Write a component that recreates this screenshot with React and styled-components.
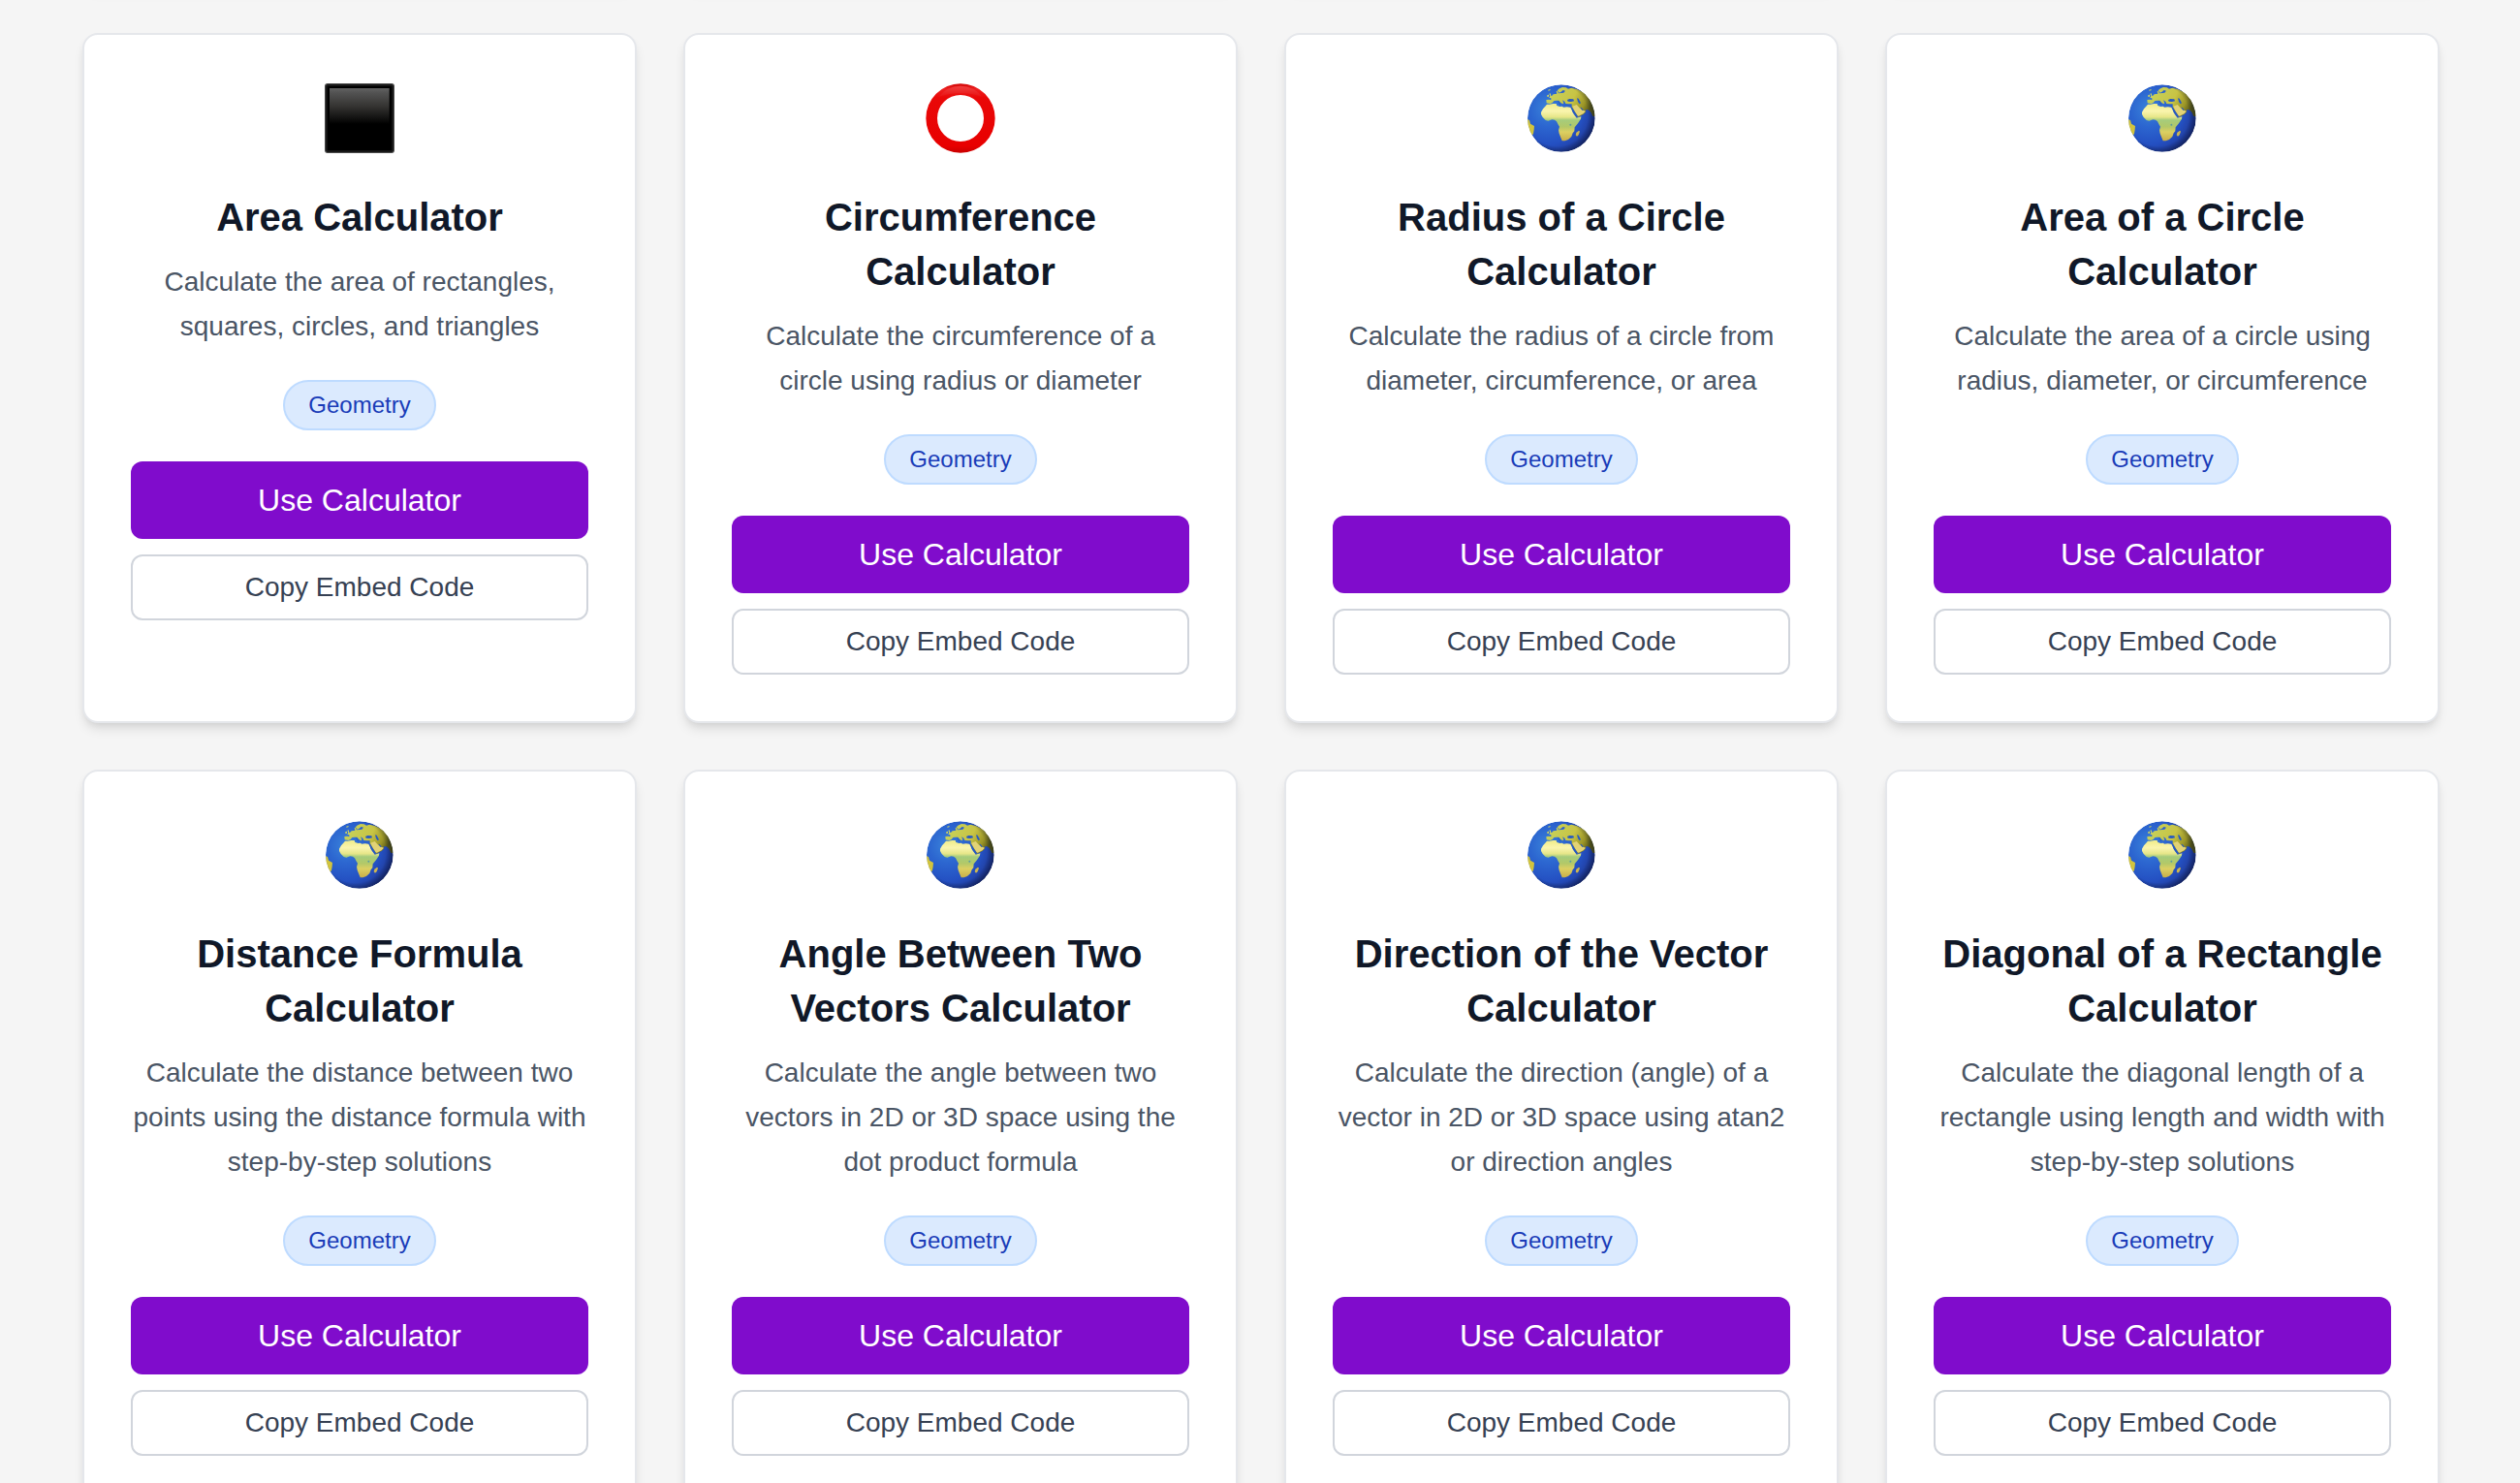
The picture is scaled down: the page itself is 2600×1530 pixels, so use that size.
import React from 'react';
import styled, { createGlobalStyle } from "styled-components";

const GlobalStyle = createGlobalStyle`
    * {
        box-sizing: border-box;
    }

    body {
        margin: 0;
        background-color: #F5F5F5;
        font-family: "Liberation Sans", Arial, sans-serif;
    }
`;

const Page = styled.main`
    padding: 34px 83px 48px 85px;
    overflow: hidden;
`;

const Grid = styled.div`
    display: grid;
    grid-template-columns: repeat(4, minmax(0, 1fr));
    gap: 48px;
`;

const PreviousRow = styled(Grid)`
    height: 100px;
    margin-top: -148px;
    margin-bottom: 48px;
`;

const Card = styled.article`
    background-color: #FFFFFF;
    border: 2px solid #E5E7EB;
    border-radius: 16px;
    padding: 48px;
    text-align: center;
    box-shadow: 0 8px 12px -2px rgba(0, 0, 0, 0.1), 0 4px 8px -4px rgba(0, 0, 0, 0.1);
`;

const IconBox = styled.div`
    height: 80px;
    padding-top: 2px;
    margin-bottom: 32px;
`;

const Icon = styled.svg`
    display: block;
    width: 72px;
    height: 72px;
    margin: 0 auto;
`;

const Title = styled.h3`
    margin: 0 0 16px;
    color: #101828;
    font-size: 40px;
    font-weight: 700;
    line-height: 56px;
`;

const Description = styled.p`
    margin: 0 0 32px;
    color: #4A5565;
    font-size: 28px;
    line-height: 46px;
`;

const Badge = styled.span`
    display: block;
    width: fit-content;
    margin: 0 auto 32px;
    padding: 8px 24px;
    background-color: #DBEAFE;
    border: 2px solid #BEDBFF;
    border-radius: 26px;
    color: #193CB8;
    font-size: 24px;
    line-height: 32px;
`;

const Actions = styled.div`
    display: flex;
    flex-direction: column;
    gap: 16px;
`;

const UseButton = styled.button`
    padding: 16px 32px;
    background-color: #800CCC;
    border: none;
    border-radius: 12px;
    color: #FFFFFF;
    font-family: inherit;
    font-size: 32px;
    line-height: 48px;
    cursor: pointer;
`;

const CopyButton = styled.button`
    padding: 12px 32px;
    background-color: #FFFFFF;
    border: 2px solid #D1D5DC;
    border-radius: 12px;
    color: #364153;
    font-family: inherit;
    font-size: 28px;
    line-height: 40px;
    cursor: pointer;
`;

const SquareIcon = () => (
    <Icon viewBox="45 48 216 216" aria-hidden="true">
        <defs>
            <linearGradient id="square-shine" x1="0" y1="0" x2="0" y2="1">
                <stop offset="0" stopColor="#626262" />
                <stop offset="0.08" stopColor="#525252" />
                <stop offset="0.3" stopColor="#353432" />
                <stop offset="0.6" stopColor="#000000" />
            </linearGradient>
        </defs>
        <rect x="47" y="50" width="212" height="212" rx="7" fill="#000000" stroke="#4A4A4A" strokeWidth="4" />
        <rect x="51" y="54" width="204" height="204" rx="4" fill="none" stroke="#1C1C1C" strokeWidth="4" />
        <rect x="60" y="63" width="185" height="185" fill="url(#square-shine)" />
    </Icon>
);

const RingIcon = () => (
    <Icon viewBox="45 48 216 216" aria-hidden="true">
        <defs>
            <linearGradient id="ring-red" x1="0" y1="0" x2="0" y2="1">
                <stop offset="0" stopColor="#D00505" />
                <stop offset="0.08" stopColor="#EE2020" />
                <stop offset="0.2" stopColor="#E90808" />
                <stop offset="0.9" stopColor="#E80000" />
                <stop offset="1" stopColor="#C80000" />
            </linearGradient>
            <linearGradient id="ring-shine" x1="0" y1="0" x2="0" y2="1">
                <stop offset="0" stopColor="#F04040" />
                <stop offset="1" stopColor="#E81010" />
            </linearGradient>
        </defs>
        <path
            fill="url(#ring-red)"
            fillRule="evenodd"
            d="M153 49a107 107 0 1 0 0 214a107 107 0 1 0 0 -214zM153 84a72 72 0 1 1 0 144a72 72 0 1 1 0 -144z"
        />
        <path fill="url(#ring-shine)" d="M84 91Q112 56 153 56Q194 56 222 91Q190 78 153 78Q116 78 84 91z" />
    </Icon>
);

const GlobeIcon = ({ id }) => (
    <Icon viewBox="45 48 216 216" aria-hidden="true">
        <defs>
            <radialGradient id={`${id}-sea`} cx="0.3" cy="0.36" r="0.75">
                <stop offset="0" stopColor="#3A83DA" />
                <stop offset="0.35" stopColor="#2C66D0" />
                <stop offset="0.7" stopColor="#2450C2" />
                <stop offset="1" stopColor="#203690" />
            </radialGradient>
            <linearGradient id={`${id}-africa`} x1="0" y1="0" x2="0" y2="1">
                <stop offset="0" stopColor="#F0EC88" />
                <stop offset="0.2" stopColor="#FAF5AE" />
                <stop offset="0.36" stopColor="#E6E688" />
                <stop offset="0.44" stopColor="#A5CC7C" />
                <stop offset="0.62" stopColor="#B2C868" />
                <stop offset="0.76" stopColor="#DCD062" />
                <stop offset="1" stopColor="#C8AE48" />
            </linearGradient>
            <linearGradient id={`${id}-asia`} x1="0" y1="0" x2="1" y2="0.3">
                <stop offset="0" stopColor="#C6D460" />
                <stop offset="0.6" stopColor="#C8C444" />
                <stop offset="0.85" stopColor="#9C9628" />
                <stop offset="1" stopColor="#5C5C18" />
            </linearGradient>
            <radialGradient id={`${id}-shade`} cx="0.44" cy="0.46" r="0.58">
                <stop offset="0.78" stopColor="#000820" stopOpacity="0" />
                <stop offset="1" stopColor="#000820" stopOpacity="0.5" />
            </radialGradient>
            <clipPath id={`${id}-disc`}>
                <circle cx="152.5" cy="156" r="104.5" />
            </clipPath>
        </defs>
        <g clipPath={`url(#${id}-disc)`}>
            <circle cx="152.5" cy="156" r="104.5" fill={`url(#${id}-sea)`} />
            <path
                fill={`url(#${id}-africa)`}
                d="M108 113L116 113L127 111L137 111L139 117L148 120L155 119L160 122L170 121L180 122L184 126L188 138L194 147L200 155L214 151L213 158L204 172L194 184L193 196L188 202L184 213L174 222L164 226L155 226L151 216L146 203L144 193L147 182L142 174L138 166L132 161L124 160L112 164L104 162L95 153L90 144L90 137L96 127L103 119z"
            />
            <path fill="#CDB552" d="M207 194L210 197L206 208L201 212L197 208L199 200z" />
            <path fill="#D2C43E" d="M44 158L54 162L57 173L69 180L68 192L66 204L60 212L44 200z" />
            <path
                fill={`url(#${id}-asia)`}
                d="M107 109L106 99L115 98L121 100L121 94L114 92L123 87L128 82L139 80L137 73L140 71L144 79L153 78L160 77L165 71L158 69L151 75L146 77L140 70L147 64L156 60L167 61L174 65L184 62L200 66L226 78L246 104L260 128L257 150L250 150L245 139L240 133L234 129L226 131L229 136L222 143L208 151L203 152L197 142L190 130L185 121L185 112L175 112L166 111L163 104L156 100L160 109L157 112L151 108L145 101L138 101L130 102L125 108L118 111z"
            />
            <path fill="#E2D276" d="M187 119L200 114L209 124L216 130L228 134L221 142L206 149L203 148L194 134z" />
            <path fill="#D3D65C" d="M115 80L119 79L121 87L124 91L116 93L118 87zM109 84L114 83L114 89L109 90zM112 68L119 66L118 70L112 71z" />
            <path fill="#285ABF" d="M171 99L178 96L190 97L192 103L183 105L173 104zM201 94L206 95L210 103L213 109L209 112L204 105zM211 122L215 123L222 131L217 131zM182 124L186 123L195 137L204 151L200 153L190 140zM141 103L144 103L151 113L148 114z" />
            <circle cx="181" cy="176" r="3" fill="#5E9C9C" />
            <circle cx="152.5" cy="156" r="104.5" fill={`url(#${id}-shade)`} />
        </g>
    </Icon>
);

const calculators = [
    {
        icon: "square",
        title: "Area Calculator",
        description: "Calculate the area of rectangles, squares, circles, and triangles",
    },
    {
        icon: "ring",
        title: "Circumference Calculator",
        description: "Calculate the circumference of a circle using radius or diameter",
    },
    {
        icon: "globe",
        title: "Radius of a Circle Calculator",
        description: "Calculate the radius of a circle from diameter, circumference, or area",
    },
    {
        icon: "globe",
        title: "Area of a Circle Calculator",
        description: "Calculate the area of a circle using radius, diameter, or circumference",
    },
    {
        icon: "globe",
        title: "Distance Formula Calculator",
        description: "Calculate the distance between two points using the distance formula with step-by-step solutions",
    },
    {
        icon: "globe",
        title: "Angle Between Two Vectors Calculator",
        description: "Calculate the angle between two vectors in 2D or 3D space using the dot product formula",
    },
    {
        icon: "globe",
        title: "Direction of the Vector Calculator",
        description: "Calculate the direction (angle) of a vector in 2D or 3D space using atan2 or direction angles",
    },
    {
        icon: "globe",
        title: "Diagonal of a Rectangle Calculator",
        description: "Calculate the diagonal length of a rectangle using length and width with step-by-step solutions",
    },
];

const icons = { square: SquareIcon, ring: RingIcon, globe: GlobeIcon };

const CalculatorCard = ({ id, icon, title, description }) => {
    const CardIcon = icons[icon];

    return (
        <Card>
            <IconBox>
                <CardIcon id={id} />
            </IconBox>
            <Title>{title}</Title>
            <Description>{description}</Description>
            <Badge>Geometry</Badge>
            <Actions>
                <UseButton type="button">Use Calculator</UseButton>
                <CopyButton type="button">Copy Embed Code</CopyButton>
            </Actions>
        </Card>
    );
};

export default function App() {
    return (
        <>
            <GlobalStyle />
            <Page>
                <PreviousRow aria-hidden="true">
                    <Card as="div" />
                    <Card as="div" />
                    <Card as="div" />
                    <Card as="div" />
                </PreviousRow>
                <Grid>
                    {calculators.map((calculator, index) => (
                        <CalculatorCard key={calculator.title} id={`globe-${index}`} {...calculator} />
                    ))}
                </Grid>
            </Page>
        </>
    );
}
